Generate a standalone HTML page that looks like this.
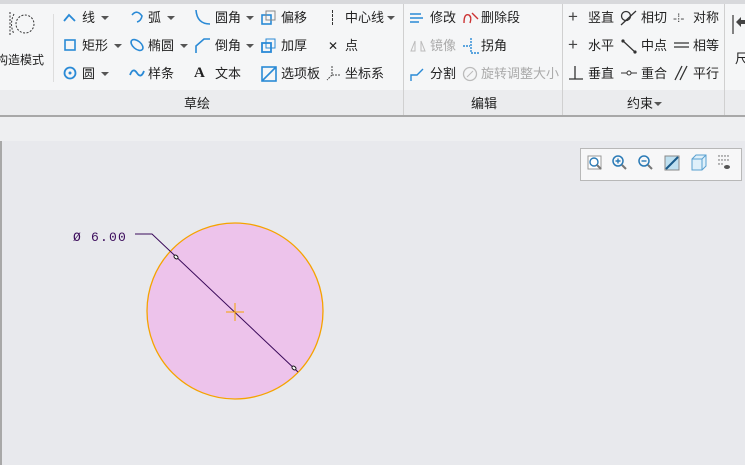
<!DOCTYPE html>
<html><head><meta charset="utf-8"><style>
body{margin:0;width:745px;height:465px;overflow:hidden;background:#e8e9ed;font-family:"Liberation Sans","Noto Sans CJK SC",sans-serif;position:relative}
.t{position:absolute;font-size:13px;color:#222;white-space:nowrap;line-height:16px}
.g{color:#aaa}
.ar{position:absolute;width:0;height:0;border-left:4px solid transparent;border-right:4px solid transparent;border-top:4px solid #555}
svg{position:absolute}
</style></head><body>
<div style="position:absolute;left:0;top:0;width:745px;height:4px;background:#d8d9dc"></div>
<div style="position:absolute;left:0;top:4px;width:745px;height:86px;background:#f5f6f7"></div>
<div style="position:absolute;left:0;top:90px;width:745px;height:25px;background:#ebecee"></div>
<div style="position:absolute;left:0;top:115px;width:745px;height:2px;background:#a8a8a8"></div>
<div style="position:absolute;left:0;top:117px;width:745px;height:24px;background:#eeeff1"></div>
<div style="position:absolute;left:0;top:141px;width:2px;height:324px;background:#a8a8a8"></div>
<!-- dividers -->
<div style="position:absolute;left:53px;top:14px;width:1px;height:68px;background:#ddd"></div>
<div style="position:absolute;left:403px;top:4px;width:1px;height:111px;background:#d0d0d0"></div>
<div style="position:absolute;left:562px;top:4px;width:1px;height:111px;background:#d0d0d0"></div>
<div style="position:absolute;left:724px;top:4px;width:1px;height:111px;background:#d0d0d0"></div>

<svg style="left:6px;top:10px" width="30" height="28"><g fill="none" stroke="#333" stroke-dasharray="2 1.5"><path d="M4 2 L4 26"/><path d="M8 4 Q3 14 8 24"/><circle cx="19" cy="14" r="9"/></g></svg>
<div class="t" style="left:-4px;top:52px;font-size:12px">构造模式</div>

<!-- col 1 -->
<svg style="left:63px;top:11px" width="14" height="14"><path d="M1 10 L6 4 L12 10" fill="none" stroke="#2a8ad6" stroke-width="1.8"/></svg>
<div class="t" style="left:82px;top:10px">线</div><div class="ar" style="left:101px;top:16px"></div>
<svg style="left:63px;top:38px" width="14" height="14"><rect x="2" y="2" width="10" height="10" fill="none" stroke="#2a8ad6" stroke-width="1.6"/></svg>
<div class="t" style="left:82px;top:38px">矩形</div><div class="ar" style="left:114px;top:44px"></div>
<svg style="left:63px;top:66px" width="14" height="14"><circle cx="7" cy="7" r="5.5" fill="none" stroke="#2a8ad6" stroke-width="1.8"/><circle cx="7" cy="7" r="1.5" fill="#2a8ad6"/></svg>
<div class="t" style="left:82px;top:66px">圆</div><div class="ar" style="left:101px;top:72px"></div>
<!-- col 2 -->
<svg style="left:129px;top:10px" width="16" height="14"><path d="M3 5 Q8 -1 13 6 Q12 11 8 12" fill="none" stroke="#2a8ad6" stroke-width="1.6"/></svg>
<div class="t" style="left:148px;top:10px">弧</div><div class="ar" style="left:167px;top:16px"></div>
<svg style="left:129px;top:38px" width="16" height="14"><ellipse cx="8" cy="7" rx="7" ry="4" transform="rotate(40 8 7)" fill="none" stroke="#2a8ad6" stroke-width="1.6"/></svg>
<div class="t" style="left:148px;top:38px">椭圆</div><div class="ar" style="left:180px;top:44px"></div>
<svg style="left:129px;top:66px" width="16" height="14"><path d="M1 9 Q4 1 8 7 Q12 13 15 5" fill="none" stroke="#2a8ad6" stroke-width="1.8"/></svg>
<div class="t" style="left:148px;top:66px">样条</div>
<!-- col 3 -->
<svg style="left:194px;top:9px" width="18" height="18"><path d="M2 1 Q3 15 16 15" fill="none" stroke="#2a8ad6" stroke-width="1.6"/></svg>
<div class="t" style="left:215px;top:10px">圆角</div><div class="ar" style="left:246px;top:16px"></div>
<svg style="left:194px;top:37px" width="18" height="18"><path d="M2 16 L2 9 L10 2 L16 2" fill="none" stroke="#2a8ad6" stroke-width="1.6"/></svg>
<div class="t" style="left:215px;top:38px">倒角</div><div class="ar" style="left:246px;top:44px"></div>
<div class="t" style="left:194px;top:65px;font-family:'Liberation Serif',serif;font-weight:bold;font-size:15px">A</div>
<div class="t" style="left:215px;top:66px">文本</div>
<!-- col 4 -->
<svg style="left:261px;top:10px" width="16" height="16"><rect x="1" y="5" width="9" height="9" fill="none" stroke="#2a8ad6" stroke-width="1.6"/><rect x="5" y="1" width="9" height="9" fill="none" stroke="#888"/></svg>
<div class="t" style="left:281px;top:10px">偏移</div>
<svg style="left:261px;top:38px" width="16" height="16"><rect x="1" y="5" width="9" height="9" fill="none" stroke="#2a8ad6" stroke-width="1.8"/><rect x="5" y="1" width="9" height="9" fill="none" stroke="#2a8ad6"/></svg>
<div class="t" style="left:281px;top:38px">加厚</div>
<svg style="left:261px;top:66px" width="16" height="16"><rect x="1" y="1" width="14" height="14" fill="none" stroke="#2a8ad6" stroke-width="1.6"/><path d="M1 15 L15 1" stroke="#2a8ad6" stroke-width="1.6"/></svg>
<div class="t" style="left:281px;top:66px">选项板</div>
<!-- col 5 -->
<div style="position:absolute;left:332px;top:10px;width:1px;height:15px;border-left:1px dashed #333"></div>
<div class="t" style="left:345px;top:10px">中心线</div><div class="ar" style="left:387px;top:16px"></div>
<div class="t" style="left:328px;top:38px;font-size:12px">✕</div>
<div class="t" style="left:345px;top:38px">点</div>
<svg style="left:325px;top:64px" width="18" height="18"><path d="M7 2 L7 11 L16 11 M7 11 L2 16" fill="none" stroke="#444" stroke-dasharray="2 1"/></svg>
<div class="t" style="left:345px;top:66px">坐标系</div>
<div class="t" style="left:184px;top:96px">草绘</div>

<!-- edit -->
<svg style="left:409px;top:10px" width="18" height="16"><path d="M1 4 H12 M1 8 H14 M1 12 H10" stroke="#2a8ad6" stroke-width="1.4"/></svg>
<div class="t" style="left:430px;top:10px">修改</div>
<svg style="left:462px;top:9px" width="18" height="18"><path d="M2 14 Q2 4 7 6 Q10 8 8 14 M10 4 L16 10" fill="none" stroke="#c33" stroke-width="1.4"/></svg>
<div class="t" style="left:481px;top:10px">删除段</div>
<svg style="left:409px;top:38px" width="18" height="16"><path d="M2 13 L6 3 L6 13 Z M12 3 L16 13 L12 13Z" fill="none" stroke="#bbb"/></svg>
<div class="t g" style="left:430px;top:38px">镜像</div>
<svg style="left:462px;top:37px" width="18" height="18"><path d="M9 1 V16 M1 9 H8 M9 16 H17" fill="none" stroke="#2a8ad6" stroke-width="1.4" stroke-dasharray="2 1"/></svg>
<div class="t" style="left:481px;top:38px">拐角</div>
<svg style="left:409px;top:65px" width="18" height="18"><path d="M2 16 V10 H8 L14 4" fill="none" stroke="#2a8ad6" stroke-width="1.4"/></svg>
<div class="t" style="left:430px;top:66px">分割</div>
<svg style="left:462px;top:65px" width="18" height="18"><circle cx="8" cy="9" r="6.5" fill="none" stroke="#bbb" stroke-width="1.3"/><path d="M5 12 L11 6" stroke="#bbb"/></svg>
<div class="t g" style="left:481px;top:66px">旋转调整大小</div>
<div class="t" style="left:471px;top:96px">编辑</div>

<!-- constraints -->
<div class="t" style="left:568px;top:9px;font-size:17px;color:#444">+</div>
<div class="t" style="left:588px;top:10px">竖直</div>
<svg style="left:620px;top:9px" width="18" height="18"><circle cx="6" cy="7" r="4.5" fill="none" stroke="#333" stroke-width="1.3"/><path d="M1 16 L16 2" stroke="#333" stroke-width="1.3"/></svg>
<div class="t" style="left:641px;top:10px">相切</div>
<div class="t" style="left:673px;top:10px;color:#444;font-size:12px">-⁞-</div>
<div class="t" style="left:693px;top:10px">对称</div>
<div class="t" style="left:568px;top:37px;font-size:17px;color:#444">+</div>
<div class="t" style="left:588px;top:38px">水平</div>
<svg style="left:620px;top:37px" width="18" height="18"><path d="M2 3 L16 16" stroke="#333" stroke-width="1.3"/><circle cx="3" cy="4" r="1.6" fill="#333"/><circle cx="15" cy="15" r="1.6" fill="#333"/></svg>
<div class="t" style="left:641px;top:38px">中点</div>
<svg style="left:673px;top:40px" width="17" height="10"><path d="M1 3 H16 M1 7 H16" stroke="#333" stroke-width="1.3"/></svg>
<div class="t" style="left:693px;top:38px">相等</div>
<svg style="left:568px;top:64px" width="16" height="18"><path d="M7 2 V15 M1 15 H15" stroke="#333" stroke-width="1.3"/></svg>
<div class="t" style="left:588px;top:66px">垂直</div>
<svg style="left:620px;top:66px" width="18" height="14"><path d="M1 7 H17" stroke="#333"/><circle cx="9" cy="7" r="2" fill="#fff" stroke="#333"/></svg>
<div class="t" style="left:641px;top:66px">重合</div>
<svg style="left:673px;top:64px" width="16" height="18"><path d="M2 16 L9 2 M7 16 L14 2" stroke="#333" stroke-width="1.3"/></svg>
<div class="t" style="left:693px;top:66px">平行</div>
<div class="t" style="left:627px;top:96px">约束</div><div class="ar" style="left:654px;top:102px"></div>

<svg style="left:731px;top:14px" width="14" height="22"><path d="M2 1 V20" stroke="#444" stroke-width="1.3"/><path d="M5 8 L10 3 V6 H14 V10 H10 V13Z" fill="#444"/></svg>
<div class="t" style="left:735px;top:51px">尺</div>

<!-- view toolbar -->
<div style="position:absolute;left:580px;top:148px;width:160px;height:31px;background:#f7f7f8;border:1px solid #b8b8b8"></div>
<svg style="left:586px;top:154px" width="150" height="20">
<rect x="2" y="2" width="13" height="13" fill="#fff" stroke="#999"/><circle cx="8" cy="8" r="4" fill="none" stroke="#2a7ab6" stroke-width="1.4"/><path d="M11 11 L15 15" stroke="#777" stroke-width="2"/>
<circle cx="32" cy="7" r="5" fill="none" stroke="#2a7ab6" stroke-width="1.5"/><path d="M29.5 7 H34.5 M32 4.5 V9.5" stroke="#2a7ab6" stroke-width="1.4"/><path d="M36 11 L40 15" stroke="#777" stroke-width="2"/>
<circle cx="58" cy="7" r="5" fill="none" stroke="#2a7ab6" stroke-width="1.5"/><path d="M55.5 7 H60.5" stroke="#2a7ab6" stroke-width="1.4"/><path d="M62 11 L66 15" stroke="#777" stroke-width="2"/>
<rect x="79" y="2" width="14" height="14" fill="#bfe0f0" stroke="#888"/><path d="M80 15 L92 3" stroke="#1a5a8a" stroke-width="2"/>
<path d="M106 5 L110 1 H120 V12 L116 16 H106Z" fill="#dff0fa" stroke="#5aa0d0"/><path d="M106 5 H116 V16 M116 5 L120 1" fill="none" stroke="#5aa0d0"/>
<g fill="#555"><circle cx="133" cy="2" r=".7"/><circle cx="136" cy="2" r=".7"/><circle cx="139" cy="2" r=".7"/><circle cx="142" cy="2" r=".7"/><circle cx="133" cy="6" r=".7"/><circle cx="136" cy="6" r=".7"/><circle cx="139" cy="6" r=".7"/><circle cx="142" cy="6" r=".7"/><circle cx="133" cy="10" r=".7"/><circle cx="136" cy="10" r=".7"/><ellipse cx="141" cy="13" rx="3" ry="2"/></g>
</svg>

<!-- drawing -->
<svg style="left:0;top:0" width="745" height="465">
<circle cx="235" cy="311" r="88" fill="#edc3eb" stroke="#f5a300" stroke-width="1.3"/>
<path d="M135 234 H152 L298 372" fill="none" stroke="#3a0a5a" stroke-width="1"/>
<ellipse cx="176" cy="257" rx="2.3" ry="1.6" transform="rotate(43 176 257)" fill="#fff" stroke="#111"/>
<ellipse cx="294" cy="368" rx="2.3" ry="1.6" transform="rotate(43 294 368)" fill="#fff" stroke="#111"/>
<path d="M226 312 H244 M235 303 V321" stroke="#f5a300" stroke-width="1"/>
<text x="73" y="241" font-family="Liberation Mono,monospace" font-size="13" letter-spacing="1.2" fill="#3a0a5a">Ø 6.00</text>
</svg>
</body></html>
